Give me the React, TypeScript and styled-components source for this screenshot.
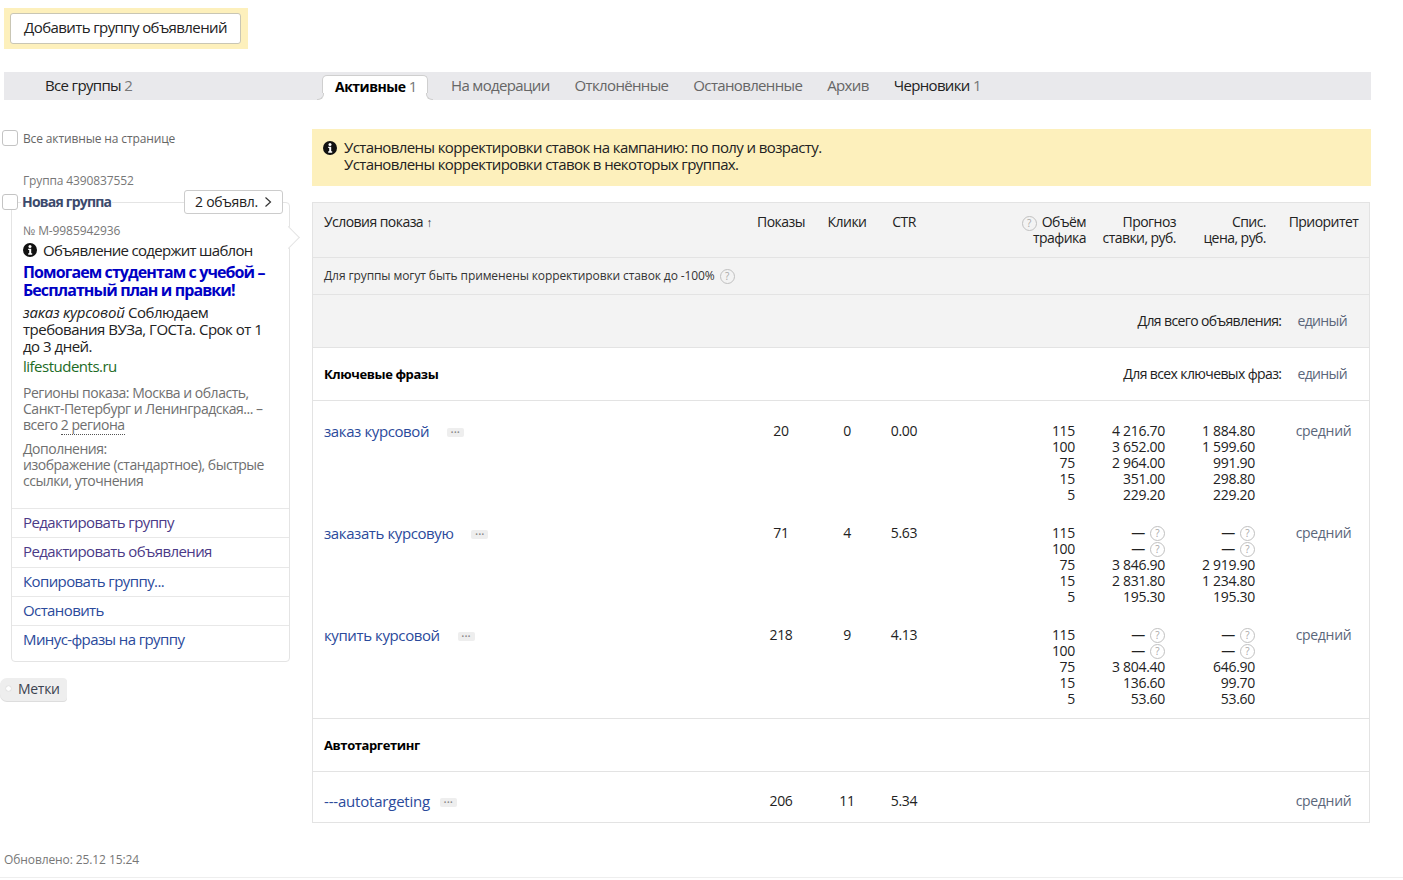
import React from "react";
import styled, { createGlobalStyle } from "styled-components";

const Global = createGlobalStyle`
  html, body { margin: 0; padding: 0; background: #fff; }
  body { font-family: "Open Sans", "Noto Sans", "Liberation Sans", sans-serif; color: #000; font-size: 14px; line-height: 16px; letter-spacing: -0.3px; }
  * { box-sizing: border-box; }
`;

const Page = styled.div`
  width: 1403px;
  height: 880px;
  overflow: hidden;
  display: flex;
  flex-direction: column;
`;
const AddWrap = styled.div`
  margin: 8px 0 0 4px;
  width: 244px;
  height: 41px;
  padding: 5px 7px 5px 6px;
  background: #fdf0bc;
`;
const AddButton = styled.button`
  width: 100%;
  height: 31px;
  background: #fff;
  border: 1px solid #c9c6b4;
  border-radius: 3px;
  font: inherit;
  font-size: 15px;
  letter-spacing: -0.6px;
  color: #222;
  padding: 0 0 3px;
`;
const TabBar = styled.div`
  margin: 23px 0 0 4px;
  width: 1367px;
  height: 28px;
  background: #e9e9ec;
  display: flex;
  align-items: stretch;
  font-size: 15px;
  letter-spacing: -0.65px;
`;
const AllGroups = styled.div`
  width: 318px;
  padding: 4px 0 0 41px;
  line-height: 18px;
  color: #222;
`;
const Count = styled.span`
  color: #777;
`;
const ActiveTab = styled.div`
  position: relative;
  margin-top: 3px;
  width: 106px;
  padding: 1px 0 0 12px;
  line-height: 18px;
  background: #fff;
  border: 1px solid #cfcfcf;
  border-bottom: 0;
  border-radius: 5px 5px 0 0;
  b { font-size: 14px; font-weight: 700; letter-spacing: -0.5px; color: #000; }
  &::before, &::after {
    content: "";
    position: absolute;
    bottom: 0;
    width: 6px;
    height: 6px;
    background: #e9e9ec;
    border-bottom: 1px solid #cfcfcf;
  }
  &::before {
    left: -6px;
    border-right: 1px solid #cfcfcf;
    border-bottom-right-radius: 6px;
    box-shadow: 3px 3px 0 3px #fff;
  }
  &::after {
    right: -6px;
    border-left: 1px solid #cfcfcf;
    border-bottom-left-radius: 6px;
    box-shadow: -3px 3px 0 3px #fff;
  }
`;
const Tabs = styled.div`
  display: flex;
  gap: 25px;
  padding: 4px 0 0 23px;
  line-height: 18px;
`;
const Tab = styled.span<{ $dark?: boolean }>`
  color: ${(p) => (p.$dark ? "#222" : "#666")};
`;
const Columns = styled.div`
  display: flex;
  flex: 1;
`;
const LeftCol = styled.div`
  width: 312px;
  flex: none;
  padding: 31px 0 0 2px;
`;
const SelectAll = styled.label`
  display: flex;
  align-items: center;
  gap: 5px;
  height: 16px;
  font-size: 12px;
  letter-spacing: -0.13px;
  color: #666;
`;
const Check = styled.span`
  display: block;
  flex: none;
  width: 16px;
  height: 16px;
  background: #fff;
  border: 1px solid #c4c4c4;
  border-radius: 3px;
`;
const RaisedCheck = styled(Check)`
  margin-top: -2px;
`;
const GroupId = styled.div`
  margin: 26px 0 0 21px;
  font-size: 12px;
  letter-spacing: -0.13px;
  color: #777;
  height: 16px;
`;
const GroupHead = styled.div`
  position: relative;
  z-index: 1;
  display: flex;
  align-items: center;
  margin-top: 1px;
  width: 281px;
  height: 24px;
`;
const GroupName = styled.span`
  margin-left: 3px;
  padding: 0 1px;
  font-size: 14px;
  font-weight: 700;
  letter-spacing: -0.8px;
  color: #3c4a6c;
  background: #fff;
`;
const CountButton = styled.span`
  margin-left: auto;
  width: 99px;
  height: 24px;
  display: flex;
  align-items: center;
  justify-content: center;
  gap: 6px;
  background: #fff;
  border: 1px solid #ccc;
  border-radius: 3px;
  font-size: 14px;
  color: #222;
`;
const Card = styled.div`
  position: relative;
  margin: -12px 0 0 9px;
  width: 279px;
  height: 460px;
  border: 1px solid #e4e4e4;
  border-radius: 4px;
  background: #fff;
  padding-top: 20px;
  &::after {
    content: "";
    position: absolute;
    right: -8px;
    top: 26px;
    width: 16px;
    height: 16px;
    background: #fff;
    border-top: 1px solid #e4e4e4;
    border-right: 1px solid #e4e4e4;
    transform: rotate(45deg) scale(0.95);
  }
`;
const CardBody = styled.div`
  padding: 0 11px;
  height: 285px;
`;
const AdNo = styled.div`
  font-size: 12px;
  letter-spacing: -0.1px;
  color: #777;
  height: 16px;
`;
const Template = styled.div`
  display: flex;
  align-items: center;
  gap: 6px;
  margin-top: 2px;
  height: 18px;
  font-size: 15px;
  letter-spacing: -0.7px;
  color: #222;
`;
const AdTitle = styled.div`
  margin-top: 4px;
  font-size: 16px;
  line-height: 18px;
  font-weight: 700;
  letter-spacing: -0.9px;
  color: #0000c4;
  white-space: nowrap;
`;
const AdText = styled.div`
  margin-top: 5px;
  font-size: 15px;
  line-height: 17px;
  letter-spacing: -0.5px;
  color: #222;
  white-space: nowrap;
  em { font-style: italic; letter-spacing: -0.2px; }
`;
const AdUrl = styled.div`
  margin-top: 2px;
  font-size: 15px;
  line-height: 18px;
  letter-spacing: -0.5px;
  color: #1d6b25;
`;
const Meta = styled.div<{ $gap: number }>`
  margin-top: ${(p) => p.$gap}px;
  font-size: 14px;
  line-height: 16px;
  letter-spacing: -0.48px;
  color: #6f6f6f;
  white-space: nowrap;
`;
const Dotted = styled.span`
  border-bottom: 1px dotted #555;
`;
const CardLink = styled.div<{ $visited?: boolean }>`
  height: 29.25px;
  padding-left: 11px;
  font-size: 15px;
  line-height: 27px;
  letter-spacing: -0.6px;
  color: ${(p) => (p.$visited ? "#4b3a87" : "#2b4a9b")};
  border-top: 1px solid #e8e8e8;
`;
const Tags = styled.div`
  margin: 16px 0 0 -2px;
  width: 67px;
  height: 23px;
  display: flex;
  align-items: center;
  gap: 7px;
  padding: 0 0 2px 6px;
  background: #eeeeee;
  border-radius: 7px 4px 4px 7px;
  box-shadow: 0 1px 0 #ddd;
  font-size: 14px;
  color: #3c4350;
  &::before {
    content: "";
    width: 5px;
    height: 5px;
    border-radius: 50%;
    background: #fff;
    box-shadow: 0 0 1px #aaa;
  }
`;
const RightCol = styled.div`
  flex: none;
  width: 1059px;
  padding-top: 29px;
`;
const Notice = styled.div`
  height: 57px;
  background: #fdf0bc;
  padding: 10px 0 0 11px;
  display: flex;
  gap: 7px;
  font-size: 15px;
  line-height: 17px;
  letter-spacing: -0.6px;
  color: #222;
`;
const NoticeIcon = styled.span`
  padding-top: 2px;
  flex: none;
  line-height: 0;
`;
const Table = styled.div`
  margin-top: 16px;
  width: 1058px;
  border: 1px solid #e3e3e3;
`;
const COLS = "435px 66px 66px 48px 158px 90px 90px 1fr";
const Head = styled.div`
  height: 55px;
  background: #f3f3f3;
  display: grid;
  grid-template-columns: ${COLS};
  padding-top: 11px;
  font-size: 14px;
  letter-spacing: -0.55px;
  color: #222;
  border-bottom: 1px solid #e3e3e3;
`;
const HeadCell = styled.div<{ $align?: string }>`
  text-align: ${(p) => p.$align || "center"};
  padding-left: ${(p) => (p.$align === "left" ? "11px" : "0")};
`;
const PriorityHead = styled.div`
  text-align: center;
  padding-left: 12px;
`;
const Sort = styled.span`
  font-size: 12px;
  color: #333;
`;
const Hint = styled.div`
  height: 37px;
  background: #f3f3f3;
  border-bottom: 1px solid #e3e3e3;
  display: flex;
  align-items: center;
  gap: 5px;
  padding-left: 11px;
  font-size: 12px;
  letter-spacing: -0.1px;
  color: #333;
`;
const Band = styled.div<{ $grey?: boolean; $h: number; $line?: boolean }>`
  height: ${(p) => p.$h}px;
  background: ${(p) => (p.$grey ? "#f3f3f3" : "#fff")};
  border-bottom: ${(p) => (p.$line === false ? "0" : "1px solid #e3e3e3")};
  display: flex;
  align-items: center;
  padding: 0 22px 0 11px;
  font-size: 14px;
  letter-spacing: -0.62px;
  color: #222;
`;
const BandTitle = styled.b`
  font-size: 13px;
  letter-spacing: -0.4px;
  color: #000;
`;
const BandRight = styled.span`
  margin-left: auto;
`;
const Single = styled.span`
  margin-left: 16px;
  color: #5b667a;
`;
const Rows = styled.div`
  padding-bottom: 11px;
  border-bottom: 1px solid #e3e3e3;
`;
const Row = styled.div<{ $top?: number }>`
  display: grid;
  grid-template-columns: ${COLS};
  padding-top: ${(p) => p.$top ?? 22}px;
  font-size: 14px;
  line-height: 16px;
  color: #222;
`;
const Phrase = styled.div`
  margin-top: -1px;
  padding-left: 11px;
  display: flex;
  align-items: flex-start;
  font-size: 15px;
  line-height: 18px;
  letter-spacing: -0.4px;
  color: #2b4a9b;
`;
const AutoPhrase = styled(Phrase)`
  letter-spacing: -0.2px;
`;
const Dots = styled.span<{ $gap: number }>`
  margin: 6px 0 0 ${(p) => p.$gap}px;
  width: 17px;
  height: 9px;
  background: #eee;
  border-radius: 2px;
  color: #8a8a8a;
  font-size: 7px;
  line-height: 9px;
  text-align: center;
  letter-spacing: 0.5px;
`;
const Center = styled.div`
  text-align: center;
`;
const Stack = styled.div<{ $pad: number }>`
  text-align: right;
  padding-right: ${(p) => p.$pad}px;
  white-space: nowrap;
`;
const Line = styled.div`
  display: flex;
  justify-content: flex-end;
  align-items: center;
  gap: 5px;
  height: 16px;
`;
const Q = styled.span`
  flex: none;
  display: inline-block;
  width: 15px;
  height: 15px;
  border: 1.5px solid #c0c0c0;
  border-radius: 50%;
  color: #a8a8a8;
  font-size: 10px;
  line-height: 12px;
  text-align: center;
  letter-spacing: 0;
`;
const TopQ = styled(Q)`
  margin: -3px 5px -3px 0;
  vertical-align: 0;
`;
const Priority = styled.div`
  text-align: center;
  padding-left: 12px;
  color: #5b667a;
`;
const Footer = styled.div`
  height: 29px;
  margin-bottom: 2px;
  padding: 3px 0 0 4px;
  font-size: 12px;
  letter-spacing: -0.1px;
  color: #777;
  border-bottom: 1px solid #eee;
`;

const Info = () => (
  <svg width="14" height="14" viewBox="0 0 14 14">
    <circle cx="7" cy="7" r="7" fill="#111" />
    <circle cx="7" cy="3.4" r="1.5" fill="#fff" />
    <path d="M5.2 5.7h3v4.6h1v1.4H5.2v-1.4h1V7.1h-1z" fill="#fff" />
  </svg>
);

type Kw = { name: string; shows: string; clicks: string; ctr: string; traffic: string[]; bid: string[]; price: string[] };
const kws: Kw[] = [
  { name: "заказ курсовой", shows: "20", clicks: "0", ctr: "0.00", traffic: ["115", "100", "75", "15", "5"], bid: ["4 216.70", "3 652.00", "2 964.00", "351.00", "229.20"], price: ["1 884.80", "1 599.60", "991.90", "298.80", "229.20"] },
  { name: "заказать курсовую", shows: "71", clicks: "4", ctr: "5.63", traffic: ["115", "100", "75", "15", "5"], bid: ["?", "?", "3 846.90", "2 831.80", "195.30"], price: ["?", "?", "2 919.90", "1 234.80", "195.30"] },
  { name: "купить курсовой", shows: "218", clicks: "9", ctr: "4.13", traffic: ["115", "100", "75", "15", "5"], bid: ["?", "?", "3 804.40", "136.60", "53.60"], price: ["?", "?", "646.90", "99.70", "53.60"] },
];

const Values = ({ items, pad }: { items: string[]; pad: number }) => (
  <Stack $pad={pad}>
    {items.map((v, i) => (
      <Line key={i}>
        {v === "?" ? (
          <>
            <span>—</span>
            <Q>?</Q>
          </>
        ) : (
          v
        )}
      </Line>
    ))}
  </Stack>
);

export default function App() {
  return (
    <Page>
      <Global />
      <AddWrap>
        <AddButton>Добавить группу объявлений</AddButton>
      </AddWrap>
      <TabBar>
        <AllGroups>
          Все группы <Count>2</Count>
        </AllGroups>
        <ActiveTab>
          <b>Активные</b> <Count>1</Count>
        </ActiveTab>
        <Tabs>
          <Tab>На модерации</Tab>
          <Tab>Отклонённые</Tab>
          <Tab>Остановленные</Tab>
          <Tab>Архив</Tab>
          <Tab $dark>
            Черновики <Count>1</Count>
          </Tab>
        </Tabs>
      </TabBar>
      <Columns>
        <LeftCol>
          <SelectAll>
            <RaisedCheck />
            Все активные на странице
          </SelectAll>
          <GroupId>Группа 4390837552</GroupId>
          <GroupHead>
            <Check />
            <GroupName>Новая группа</GroupName>
            <CountButton>
              2 объявл.
              <svg width="8" height="12" viewBox="0 0 8 12">
                <path d="M1.5 1.5 6.5 6l-5 4.5" fill="none" stroke="#333" strokeWidth="1.2" />
              </svg>
            </CountButton>
          </GroupHead>
          <Card>
            <CardBody>
              <AdNo>№ M-9985942936</AdNo>
              <Template>
                <Info />
                Объявление содержит шаблон
              </Template>
              <AdTitle>
                Помогаем студентам с учебой –
                <br />
                Бесплатный план и правки!
              </AdTitle>
              <AdText>
                <em>заказ курсовой</em> Соблюдаем
                <br />
                требования ВУЗа, ГОСТа. Срок от 1
                <br />
                до 3 дней.
              </AdText>
              <AdUrl>lifestudents.ru</AdUrl>
              <Meta $gap={10}>
                Регионы показа: Москва и область,
                <br />
                Санкт-Петербург и Ленинградская... –
                <br />
                всего <Dotted>2 региона</Dotted>
              </Meta>
              <Meta $gap={8}>
                Дополнения:
                <br />
                изображение (стандартное), быстрые
                <br />
                ссылки, уточнения
              </Meta>
            </CardBody>
            <CardLink $visited>Редактировать группу</CardLink>
            <CardLink $visited>Редактировать объявления</CardLink>
            <CardLink>Копировать группу...</CardLink>
            <CardLink>Остановить</CardLink>
            <CardLink>Минус-фразы на группу</CardLink>
          </Card>
          <Tags>Метки</Tags>
        </LeftCol>
        <RightCol>
          <Notice>
            <NoticeIcon>
              <Info />
            </NoticeIcon>
            <div>
              Установлены корректировки ставок на кампанию: по полу и возрасту.
              <br />
              Установлены корректировки ставок в некоторых группах.
            </div>
          </Notice>
          <Table>
            <Head>
              <HeadCell $align="left">
                Условия показа <Sort>↑</Sort>
              </HeadCell>
              <HeadCell>Показы</HeadCell>
              <HeadCell>Клики</HeadCell>
              <HeadCell>CTR</HeadCell>
              <HeadCell $align="right">
                <TopQ>?</TopQ>Объём
                <br />
                трафика
              </HeadCell>
              <HeadCell $align="right">
                Прогноз
                <br />
                ставки, руб.
              </HeadCell>
              <HeadCell $align="right">
                Спис.
                <br />
                цена, руб.
              </HeadCell>
              <PriorityHead>Приоритет</PriorityHead>
            </Head>
            <Hint>
              Для группы могут быть применены корректировки ставок до -100% <Q>?</Q>
            </Hint>
            <Band $grey $h={53}>
              <BandRight>Для всего объявления:</BandRight>
              <Single>единый</Single>
            </Band>
            <Band $h={53}>
              <BandTitle>Ключевые фразы</BandTitle>
              <BandRight>Для всех ключевых фраз:</BandRight>
              <Single>единый</Single>
            </Band>
            <Rows>
              {kws.map((k) => (
                <Row key={k.name}>
                  <Phrase>
                    {k.name}
                    <Dots $gap={18}>•••</Dots>
                  </Phrase>
                  <Center>{k.shows}</Center>
                  <Center>{k.clicks}</Center>
                  <Center>{k.ctr}</Center>
                  <Values items={k.traffic} pad={11} />
                  <Values items={k.bid} pad={11} />
                  <Values items={k.price} pad={11} />
                  <Priority>средний</Priority>
                </Row>
              ))}
            </Rows>
            <Band $h={53}>
              <BandTitle>Автотаргетинг</BandTitle>
            </Band>
            <Row $top={21}>
              <AutoPhrase>
                ---autotargeting
                <Dots $gap={10}>•••</Dots>
              </AutoPhrase>
              <Center>206</Center>
              <Center>11</Center>
              <Center>5.34</Center>
              <div />
              <div />
              <div />
              <Priority>средний</Priority>
            </Row>
            <Band $h={12} $line={false} />
          </Table>
        </RightCol>
      </Columns>
      <Footer>Обновлено: 25.12 15:24</Footer>
    </Page>
  );
}
